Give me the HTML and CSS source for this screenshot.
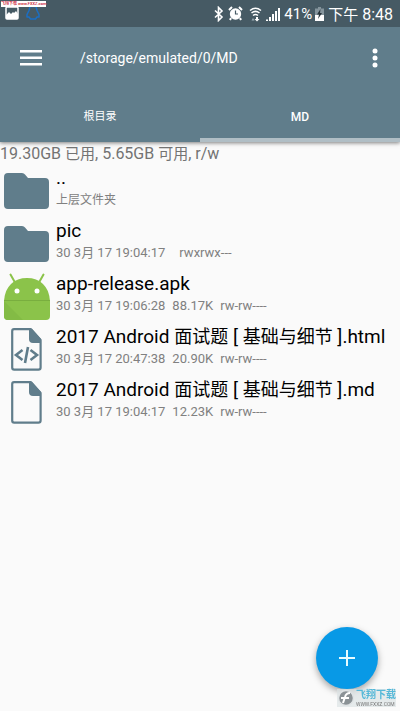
FILE: index.html
```html
<!DOCTYPE html>
<html lang="zh-CN">
<head>
<meta charset="utf-8">
<meta name="viewport" content="width=device-width, initial-scale=1">
<title>MD</title>
<link rel="stylesheet" href="styles.css">
</head>
<body>
<svg class="defs" aria-hidden="true">
  <symbol id="folder" viewBox="0 0 46 36">
    <path fill="#607d8b" d="M4 0h14q2 0 3 1.500l3 3.500h17q4 0 4 4v23q0 4-4 4H4q-4 0-4-4V4q0-4 4-4z"/>
  </symbol>
  <symbol id="page" viewBox="0 0 31 43">
    <path fill="none" stroke="#607d8b" stroke-width="2.200" stroke-linejoin="round" d="M3 1.200h17L29.600 12v27.500q0 2.200-2.200 2.200H3.200Q1.200 41.700 1.200 39.500V3.200q0-2 1.800-2z"/>
    <path fill="#607d8b" d="M18 1h3l9 10v4H22q-4 0-4-4z"/>
  </symbol>
</svg>
<header class="top">
  <div class="status">
    <div class="notices">
      <svg width="14" height="14" viewBox="0 0 14 14"><rect x="1" y="1" width="12" height="12" rx="1" fill="none" stroke="#fff" stroke-width="1.500"/><path fill="#fff" d="M1 9l3-3 2 2 2-2 1 1 2-2 2 3v5H1z"/></svg>
      <svg width="14" height="14" viewBox="0 0 14 14"><path fill="none" stroke="#1b6fc4" stroke-width="1.500" stroke-linejoin="round" d="M4 0.500h6l1 4 2 4v2.500h-2l-1.500 2h-5L3 11H1V8.500l2-4z"/></svg>
      <span class="stamp">飞翔下载 www.FXXZ.com</span>
    </div>
    <div class="indicators">
      <svg width="10" height="16" viewBox="0 0 10 16"><path fill="none" stroke="#fff" stroke-width="1.600" d="M1 4.500l7 6.500-3.500 3.500V1.500L8 5l-7 6.500"/></svg>
      <svg width="15" height="15" viewBox="0 0 15 15"><circle cx="7.500" cy="8" r="5.700" fill="#fff"/><path fill="none" stroke="#fff" stroke-width="2" d="M1 4l3-3M14 4l-3-3M3 12l-1 2M12 12l1 2"/><path fill="none" stroke="#465a64" stroke-width="1.200" d="M7.500 4.500V8H10"/></svg>
      <svg class="wifi" width="13" height="16" viewBox="0 0 13 16"><g fill="none" stroke="#fff" stroke-width="1.500"><path d="M1 4.500q5.500-4.500 11 0M2.500 7q4-3.300 8 0M4 9.500q2.500-2 5 0"/></g><path fill="#fff" d="M7 11h2v2h1.500l-2.500 2.500L5.500 13H7z"/><path fill="#9aabb3" d="M2.500 14.500h3l-1.500-2.500z"/></svg>
      <svg width="14" height="14" viewBox="0 0 14 14"><path fill="#fff" d="M0 12.500h2V14H0zM3 10h2v4H3zM6 7h2v7H6zM9 4h2v10H9zM12 1h2v13h-2z"/></svg>
      <span class="percent">41%</span>
      <svg class="battery" width="9" height="14" viewBox="0 0 9 14"><path fill="#84949c" d="M3 0h3v1.500h3V14H0V1.500h3z"/><path fill="#fff" d="M0 8h9v6H0z"/><path fill="#26333a" d="M5.500 2L2 7.500h2L3 12l4-6H5z"/></svg>
      <time class="clock"><span class="han-small">下午</span> 8:48</time>
    </div>
  </div>
  <div class="toolbar">
    <button class="icon-button" aria-label="菜单"><svg width="22" height="16" viewBox="0 0 22 16"><path fill="#fff" d="M0 0h22v2.500H0zM0 6.500h22V9H0zM0 13h22v2.500H0z"/></svg></button>
    <h1 class="path">/storage/emulated/0/MD</h1>
    <button class="icon-button more" aria-label="更多"><svg width="6" height="20" viewBox="0 0 6 20"><g fill="#fff"><circle cx="3" cy="3" r="2.500"/><circle cx="3" cy="10" r="2.500"/><circle cx="3" cy="17" r="2.500"/></g></svg></button>
  </div>
  <nav class="tabs">
    <a class="tab" href="#root">根目录</a>
    <a class="tab current" href="#md">MD</a>
  </nav>
</header>
<main>
  <p class="storage">19.30GB <span class="han-small">已用</span>, 5.65GB <span class="han-small">可用</span>, r/w</p>
  <ul class="files">
    <li class="file">
      <div class="icon"><svg width="46" height="36"><use href="#folder"/></svg></div>
      <div class="info"><a class="name" href="#up">..</a><div class="meta parent">上层文件夹</div></div>
    </li>
    <li class="file">
      <div class="icon"><svg width="46" height="36"><use href="#folder"/></svg></div>
      <div class="info"><a class="name" href="#pic">pic</a><div class="meta"><span class="wide">30 3月 17 19:04:17</span><span>rwxrwx---</span></div></div>
    </li>
    <li class="file">
      <div class="icon"><svg width="46" height="48" viewBox="0 0 46 48"><path fill="none" stroke="#8bc34a" stroke-width="2" stroke-linecap="round" d="M6.500 1.500l4.500 8M39.500 1.500L35 9.500"/><path fill="#8bc34a" d="M0 28C1 13 10 5 23 5s22 8 23 23z"/><path fill="#8bc34a" d="M0 28h46v15q0 4-4 4H4q-4 0-4-4z"/><path fill="#83bb45" d="M0 28l19 19H4q-4 0-4-4z"/><path fill="#79ae3f" d="M0 27h46v1H0z"/><circle cx="13" cy="18" r="2.500" fill="#fff"/><circle cx="33" cy="18" r="2.500" fill="#fff"/></svg></div>
      <div class="info"><a class="name" href="#apk">app-release.apk</a><div class="meta"><span>30 3月 17 19:06:28</span><span>88.17K</span><span>rw-rw----</span></div></div>
    </li>
    <li class="file">
      <div class="icon"><svg width="31" height="43" viewBox="0 0 31 43"><use href="#page"/><path fill="none" stroke="#607d8b" stroke-width="2.600" d="M11.500 22L5 27l6.500 5M19.500 22l6.500 5-6.500 5M17 19l-3 16"/></svg></div>
      <div class="info"><a class="name" href="#html">2017 Android <span class="han">面试题</span> [ <span class="han">基础与细节</span> ].html</a><div class="meta"><span>30 3月 17 20:47:38</span><span>20.90K</span><span>rw-rw----</span></div></div>
    </li>
    <li class="file">
      <div class="icon"><svg width="31" height="43"><use href="#page"/></svg></div>
      <div class="info"><a class="name" href="#mdfile">2017 Android <span class="han">面试题</span> [ <span class="han">基础与细节</span> ].md</a><div class="meta"><span>30 3月 17 19:04:17</span><span>12.23K</span><span>rw-rw----</span></div></div>
    </li>
  </ul>
</main>
<button class="fab" aria-label="新建"><svg width="16" height="16" viewBox="0 0 16 16"><path fill="#e8fbff" d="M7 0h2v7h7v2H9v7H7V9H0V7h7z"/></svg></button>
<div class="watermark">
  <svg width="18" height="18" viewBox="0 0 18 18"><circle cx="9" cy="9" r="7.500" fill="#8b9296" stroke="#dfe3e5" stroke-width="1.500"/><path fill="none" stroke="#fff" stroke-width="2" d="M13 4q-4 0-5 4l-2 6M4 9h8"/></svg>
  <div class="brand"><span class="brand-name">飞翔下载</span><span class="brand-url">WWW.FXXZ.COM</span></div>
</div>
</body>
</html>
```
FILE: styles.css
```css
* { box-sizing: border-box; }

body {
  margin: 0;
  min-height: 100vh;
  background: #fafafa;
  color: #000;
  font-family: Roboto, "Noto Sans CJK SC", sans-serif;
}

button { border: 0; padding: 0; background: none; cursor: pointer; }
a { color: inherit; text-decoration: none; }
svg { display: block; flex: none; }
.defs { position: absolute; width: 0; height: 0; }

.top {
  background: #607d8b;
  color: #fff;
  box-shadow: 0 1px 4px rgba(0, 0, 0, 0.5);
}

.status {
  display: flex;
  justify-content: space-between;
  height: 27px;
  padding: 0 7px 0 5px;
  background: #465a64;
}
.notices {
  position: relative;
  display: flex;
  align-items: flex-end;
  gap: 7px;
  padding-bottom: 7px;
}
.stamp {
  position: absolute;
  top: 1px;
  left: -4px;
  background: #fff;
  color: #c8102e;
  font-size: 4px;
  font-weight: 500;
  line-height: 6px;
  white-space: nowrap;
}
.indicators { display: flex; align-items: center; gap: 4px; white-space: nowrap; }
.wifi { margin-left: 2px; }
.percent { font-size: 15px; }
.clock { font-size: 16px; }
.battery { margin-left: -1px; }

.toolbar { display: flex; align-items: center; height: 62px; padding: 0 9px 0 15px; }
.icon-button { display: flex; align-items: center; justify-content: center; width: 32px; height: 32px; }
.path { flex: 1; margin: 0 0 0 33px; font-size: 14px; font-weight: 400; }

.tabs { display: flex; height: 53px; }
.tab {
  flex: 1;
  padding-top: 20px;
  border-bottom: 4px solid transparent;
  font-size: 11px;
  line-height: 16px;
  text-align: center;
}
.current { border-color: #b0bec5; font-size: 12px; font-weight: 500; }

.storage { margin: 0; padding-top: 1px; color: #737373; font-size: 16px; line-height: 21px; }
.han-small { font-size: 15px; }

.files { margin: 0; padding: 0; list-style: none; }
.file { display: flex; height: 53px; }
.icon {
  display: flex;
  align-items: center;
  justify-content: center;
  width: 52px;
  margin-right: 4px;
  padding: 0 0 2px 1px;
}
.info { flex: 1; min-width: 0; white-space: nowrap; }
.name { display: block; font-size: 19px; line-height: 26px; }
.han { font-size: 18px; }
.meta { display: flex; gap: 7px; color: #808080; font-size: 13px; line-height: 18px; }
.parent { font-size: 12px; }
.wide { margin-right: 7px; }

.fab {
  position: fixed;
  right: 22px;
  bottom: 22px;
  display: flex;
  align-items: center;
  justify-content: center;
  width: 62px;
  height: 62px;
  border-radius: 50%;
  background: #0899e6;
  box-shadow: 0 3px 7px rgba(0, 0, 0, 0.35);
}

.watermark {
  position: fixed;
  right: 4px;
  bottom: 4px;
  display: flex;
  align-items: center;
  gap: 1px;
  background: rgba(220, 226, 228, 0.7);
}
.brand { display: flex; flex-direction: column; }
.brand-name { color: #55b8d8; font-size: 10px; font-weight: 700; line-height: 12px; }
.brand-url { color: #777; font-size: 5px; line-height: 6px; }
```
